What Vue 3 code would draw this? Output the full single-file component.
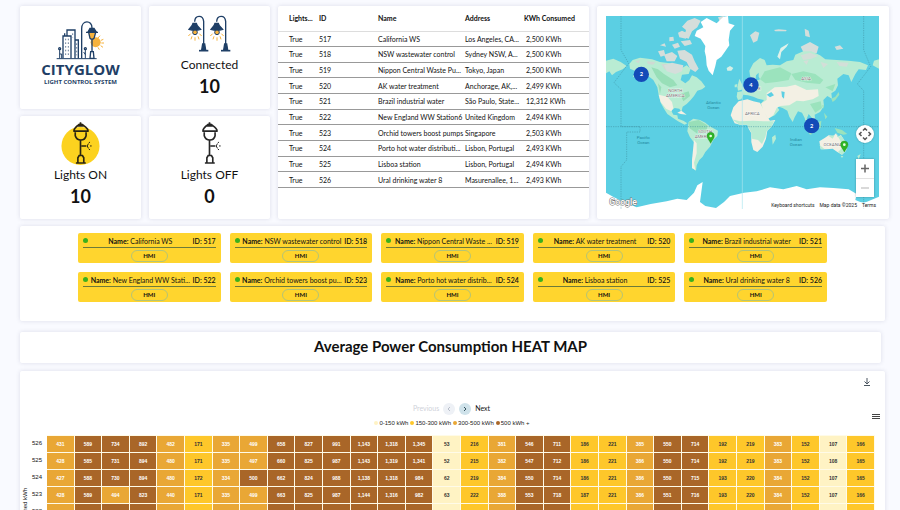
<script setup>
import { ref } from 'vue';

const stations = [
  { id: 517, name: 'California WS', address: 'Los Angeles, CA...', kwh: '2,500' },
  { id: 518, name: 'NSW wastewater control', address: 'Sydney NSW, A...', kwh: '2,500' },
  { id: 519, name: 'Nippon Central Waste Pu...', short: 'Nippon Central Waste ...', address: 'Tokyo, Japan', kwh: '2,500' },
  { id: 520, name: 'AK water treatment', address: 'Anchorage, AK,...', kwh: '2,499' },
  { id: 521, name: 'Brazil industrial water', address: 'São Paulo, State...', kwh: '12,312' },
  { id: 522, name: 'New England WW Station6', short: 'New England WW Stati...', address: 'United Kingdom', kwh: '2,494' },
  { id: 523, name: 'Orchid towers boost pumps', short: 'Orchid towers boost pu...', address: 'Singapore', kwh: '2,503' },
  { id: 524, name: 'Porto hot water distributi...', short: 'Porto hot water distrib...', address: 'Lisbon, Portugal', kwh: '2,493' },
  { id: 525, name: 'Lisboa station', address: 'Lisbon, Portugal', kwh: '2,494' },
  { id: 526, name: 'Ural drinking water 8', address: 'Masurenallee, 1...', kwh: '2,493' },
];

const heatRows = [
  { id: 526, values: [431, 589, 734, 892, 482, 171, 335, 499, 658, 827, 991, 1143, 1318, 1345, 53, 216, 381, 546, 711, 186, 221, 385, 550, 714, 192, 219, 383, 152, 107, 166] },
  { id: 525, values: [428, 585, 731, 894, 480, 171, 335, 497, 660, 825, 987, 1143, 1319, 1341, 52, 215, 382, 547, 712, 186, 221, 386, 550, 714, 192, 219, 383, 152, 108, 165] },
  { id: 524, values: [427, 588, 730, 894, 480, 172, 334, 500, 662, 824, 988, 1138, 1318, 984, 62, 219, 384, 550, 714, 186, 221, 386, 550, 715, 193, 220, 384, 152, 107, 165] },
  { id: 523, values: [428, 589, 494, 823, 440, 171, 335, 499, 663, 825, 987, 1144, 1316, 982, 63, 222, 388, 553, 718, 187, 221, 386, 551, 716, 193, 220, 384, 152, 107, 166] },
  { id: 522, values: [427, 586, 732, 893, 481, 172, 335, 498, 661, 825, 988, 1142, 1317, 983, 62, 220, 385, 551, 715, 187, 221, 386, 551, 715, 193, 220, 384, 152, 107, 166] },
];

const legend = [
  { label: '0-150 kWh', level: 'low' },
  { label: '150-300 kWh', level: 'mid' },
  { label: '300-500 kWh', level: 'high' },
  { label: '500 kWh +', level: 'max' },
];

const level = (v) => {
  if (v < 150) return 'low';
  if (v < 300) return 'mid';
  if (v < 500) return 'high';
  return 'max';
};

const clusters = [
  { x: 154, y: 223, count: 2 },
  { x: 483, y: 255, count: 4 },
  { x: 665, y: 377, count: 2 },
];

const page = ref(0);
</script>

<template>
  <div class="dashboard">
    <div class="top">
      <div class="card brand">
        <svg class="brand-icon" viewBox="162 62 150 120" fill="none" stroke="#1f3f66" stroke-width="4">
          <circle cx="281" cy="129" r="15" fill="#f6b23c" stroke="none" />
          <g stroke="#f6b23c" stroke-width="3">
            <path d="M288 116L294 109M297 123L304 120M298 131H306M296 139L303 144M288 144L292 151" />
          </g>
          <path d="M164 178H284" stroke-width="3" />
          <path d="M183 177V110H195V92H219V122M207 177V110H195M219 122H229V177M219 122V177M188 110V102" />
          <path d="M191 118V170M199 118V170M212 102V114M224 132V168" stroke-width="2" stroke-dasharray="5 6" />
          <path d="M173 177V152M179 177V164H173M250 177V152M245 158L250 166" stroke-width="3" />
          <circle cx="173" cy="148" r="3" /><circle cx="250" cy="148" r="3" />
          <path d="M239 177V88C239 61 270 61 270 86" />
          <path d="M258 98L264 87H276L283 98Z" fill="#1f3f66" />
          <path d="M260 99L264 117Q270 123 276 117L281 99Z" fill="#f6b23c" />
          <path d="M252 99H288M270 122V156M264 177L266 157H274L276 177Z" />
        </svg>
        <div class="brand-name">CITYGLOW</div>
        <div class="brand-sub">LIGHT CONTROL SYSTEM</div>
      </div>

      <div class="card stat">
        <div class="stat-icon">
          <svg class="pair" viewBox="566 45 129 111" fill="none" stroke="#1f3f66" stroke-width="4">
            <g v-for="dx in [0, 66]" :key="dx" :transform="`translate(${dx} 0)`">
              <path d="M613 140V64C611 44 587 44 586 65" />
              <path d="M607 150L610 132H616L619 150Z" fill="#1f3f66" />
              <path d="M599 152H627" stroke-width="5" />
              <path d="M581 70H591L594 77L604 88Q587 94 569 88L578 77Z" fill="#1f3f66" />
              <circle cx="587" cy="97" r="7" fill="#f6b23c" stroke-width="3" />
              <path d="M574 101L567 108M578 109L575 118M587 112V122M596 109L599 118M600 101L607 108" stroke="#f6b23c" stroke-width="3" />
            </g>
          </svg>
        </div>
        <div class="stat-label">Connected</div>
        <div class="stat-value">10</div>
      </div>

      <div class="card stat on">
        <div class="stat-icon">
          <svg class="lamp" viewBox="180 365 118 131" fill="none" stroke="#2a2412" stroke-width="5">
            <circle cx="239" cy="438" r="58" fill="#fcd21f" stroke="none" />
            <path d="M239 366V371M229 377Q239 366 250 377M219 392Q219 386 229 377H250Q262 386 262 392M217 393H264M223 396V407Q227 420 240 420Q253 420 256 407V396" />
            <path d="M239 420V466M242 438H257M231 489V474L235 467H245L249 474V489M225 490H255" />
            <path d="M263 431Q256 438 263 445M264 429L268 426M268 438H273M264 447L268 450" stroke-width="3" />
          </svg>
        </div>
        <div class="stat-label">Lights ON</div>
        <div class="stat-value">10</div>
      </div>

      <div class="card stat off">
        <div class="stat-icon">
          <svg class="lamp" viewBox="180 365 118 131" fill="none" stroke="#262626" stroke-width="5">
            <path d="M239 366V371M229 377Q239 366 250 377M219 392Q219 386 229 377H250Q262 386 262 392M217 393H264M223 396V407Q227 420 240 420Q253 420 256 407V396" />
            <path d="M239 420V466M242 438H257M231 489V474L235 467H245L249 474V489M225 490H255" />
            <path d="M263 431Q256 438 263 445M264 429L268 426M268 438H273M264 447L268 450" stroke-width="3" />
          </svg>
        </div>
        <div class="stat-label">Lights OFF</div>
        <div class="stat-value">0</div>
      </div>

      <div class="card list">
        <table>
          <thead>
            <tr>
              <th class="c-on">Lights...</th>
              <th class="c-id">ID</th>
              <th class="c-name">Name</th>
              <th class="c-addr">Address</th>
              <th class="c-kwh">KWh Consumed</th>
            </tr>
          </thead>
          <tbody>
            <tr v-for="s in stations" :key="s.id">
              <td>True</td>
              <td>{{ s.id }}</td>
              <td>{{ s.name }}</td>
              <td>{{ s.address }}</td>
              <td>{{ s.kwh }} KWh</td>
            </tr>
          </tbody>
        </table>
      </div>

      <div class="card map-card">
        <div class="map">
          <svg class="world" viewBox="48 48 819 579" preserveAspectRatio="xMidYMid slice">
            <rect x="48" y="48" width="819" height="579" fill="#5bcfe3" />
            <!-- americas -->
            <g fill="#b9ecd3">
              <path d="M118 192L128 180 150 173 186 178 210 186 240 190 262 196 276 204 290 196 302 206 296 222 276 224 272 240 286 250 298 240 306 226 320 232 334 244 346 260 336 268 322 272 312 288 302 300 290 312 278 320 274 336 268 326 254 324 244 332 250 344 262 346 264 356 280 362 292 370 284 374 264 364 246 352 232 342 222 326 212 308 206 284 202 262 190 240 172 226 150 222 128 232 138 214 120 206Z" />
              <path d="M296 366L310 356 330 360 346 368 358 378 384 392 382 408 370 420 360 440 346 456 338 470 328 480 320 496 318 512 306 504 306 484 312 456 314 430 300 412 292 394Z" />
            </g>
            <path d="M206 284L232 290 246 306 250 324 244 334 228 326 212 306ZM312 420L320 430 320 460 312 488 316 510 306 504 306 480ZM262 338L274 332 290 344 272 342Z" fill="#f3f0e4" />
            <path d="M184 202L204 208 222 222 250 240 262 256 240 262 216 250 200 232ZM296 366L326 360 352 376 350 396 320 400 298 384ZM270 282L296 274 300 288 280 304ZM204 250L214 262 210 282Z" fill="#98dfb8" />
            <path d="M170 184L196 186 190 194 174 192ZM214 192L240 192 258 200 270 206 262 218 240 214 222 206ZM136 184L150 180 146 190Z" fill="#cfd9d3" />
            <!-- arctic islands -->
            <g fill="#d5dedb">
              <path d="M204 154L222 150 226 166 212 170ZM222 164L246 156 262 168 254 184 230 184ZM246 134L264 128 270 140 254 146ZM264 98L276 92 292 100 288 116 268 112ZM292 62L314 54 332 62 322 82 306 94 296 116 282 112 288 90 276 80ZM262 152L284 150 306 164 314 184 326 206 316 216 300 206 290 186 270 176ZM210 136L224 130 228 140ZM238 112L250 110 252 122 238 124ZM272 124L300 120 306 132 284 138ZM222 196L246 188 280 196 276 214 256 222 230 214ZM384 52L400 48 408 60 392 70Z" />
              <path d="M480 106L496 94 508 98 502 122 490 128ZM644 86L656 92 660 112 646 108ZM632 140L660 126 686 140 680 160 640 156ZM552 90L566 88 590 90 588 94H556ZM734 140L750 136 760 146 740 150Z" />
            </g>
            <path d="M562 170L572 144 596 130 590 140 574 156 570 178Z" fill="#dff2ea" />
            <path d="M320 92L340 82 332 66 350 54 380 70 400 50 414 48 416 70 434 76 420 92 416 120 418 136 404 156 394 170 380 180 376 198 368 226 356 212 350 196 348 170 344 154 346 138 332 116 314 108Z" fill="#fff" />
            <path d="M410 204L420 198 430 204 424 212H412Z" fill="#d5efe6" />
            <!-- europe and asia -->
            <path d="M440 290L442 276 456 274 458 262 474 252 484 240 480 226 478 212 490 190 510 174 524 180 530 196 548 194 570 196 590 184 610 180 616 164 640 154 664 154 690 166 706 178 740 180 776 182 810 186 834 196 828 210 806 208 796 222 784 246 776 226 760 222 742 236 744 256 736 272 724 280 726 296 712 288 700 300 702 318 690 336 674 344 676 362 664 352 656 342 650 356 664 392 650 380 644 354 636 338 624 334 614 352 608 366 598 350 592 332 578 324 560 318 568 330 554 346 534 356 520 334 512 312 522 300 504 296 490 290 474 286 460 284 454 298 444 300Z" fill="#b9ecd3" />
            <path d="M530 280L554 262 590 260 616 254 650 270 684 268 686 288 668 298 640 304 620 302 598 316 570 318 560 324 550 346 534 356 520 334 514 310 530 300Z" fill="#f3f0e4" />
            <path d="M524 214L570 202 604 220 596 240 560 246 526 250 510 238ZM604 222L640 214 676 222 700 240 690 252 650 248 616 240ZM660 312L692 304 696 324 676 338ZM706 262L736 252 728 274Z" fill="#9be3bd" />
            <path d="M632 166L660 158 684 168 664 176 640 180ZM640 184L656 180 650 194ZM740 186L776 188 770 200 748 198ZM692 186L714 192 700 204Z" fill="#d3dfd8" />
            <path d="M48 182L70 176 92 186 110 198 98 208 78 216 66 226 58 214 48 220ZM867 178L852 182 848 196 867 206ZM442 260L448 236 456 252 460 268 444 272ZM434 254L442 252 440 262H434Z" fill="#b9ecd3" />
            <path d="M506 218L498 226 496 244 510 238 506 230ZM530 284L544 276 552 286 540 292Z M574 274L584 276 582 296 576 290Z" fill="#5bcfe3" />
            <path d="M724 296L736 290 746 276 748 284 736 300 728 306ZM644 382L660 392 668 402 660 404ZM672 372L694 362 692 384 676 388ZM734 384L756 390 772 402 760 404 742 398ZM696 316L702 316 700 326ZM702 338L712 350 706 358Z" fill="#9be3bd" />
            <!-- africa -->
            <path d="M422 346L430 322 446 304 472 298 490 304 510 308 520 328 530 348 540 362 556 360 546 378 532 392 528 416 518 440 502 456 490 450 484 426 484 400 476 386 472 374 450 374 434 370Z" fill="#f3f0e4" />
            <path d="M426 358L450 364 490 362 520 364 552 364 544 380 530 394 526 412 516 432 504 420 486 416 484 398 472 374 448 374ZM546 412L556 404 558 416 548 434Z" fill="#b9ecd3" />
            <!-- oceania -->
            <path d="M688 424L704 414 716 406 730 408 738 400 744 412 752 404 760 416 772 434 768 452 756 464 742 456 728 446 708 448 692 448Z" fill="#f3f0e4" />
            <path d="M738 400L748 410 752 404 760 416 774 436 768 452 756 464 744 456 760 440 750 420ZM716 408L734 406 728 416ZM688 434L694 448 704 448ZM752 468H760L756 474ZM802 468L812 462 806 478Z" fill="#b9ecd3" />
            <path d="M48 578L72 592 96 604 140 622 182 612 230 604 262 596 290 600 312 578 322 556 338 546 334 576 330 606 346 618 378 624 402 606 420 588 462 578 500 574 540 562 580 568 620 558 650 568 690 562 730 564 776 568 800 582 796 600 820 610 867 590V627H48Z" fill="#fff" />
            <!-- meridian, equator and date line -->
            <path d="M457 48V627" stroke="#a9e6ee" stroke-width="2" />
            <g fill="none" stroke="#3f8f9f" stroke-width="1.5" stroke-dasharray="4 3">
              <path d="M48 380H867" />
              <path d="M93 48V150L116 190 72 248 93 268V380H150V396H110V480L93 500V627M821 48V150L842 200 802 252 821 272V627" />
            </g>
            <g class="label land">
              <text x="256" y="275">NORTH</text><text x="256" y="290">AMERICA</text>
              <text x="345" y="400">SOUTH</text><text x="342" y="414">AMERICA</text>
              <text x="487" y="345">AFRICA</text><text x="648" y="240">ASIA</text>
              <text x="488" y="270">EUROPE</text><text x="728" y="438">OCEANIA</text>
            </g>
            <g class="label sea">
              <text x="370" y="313">Atlantic</text><text x="370" y="326">Ocean</text>
              <text x="160" y="418">Pacific</text><text x="160" y="431">Ocean</text>
              <text x="618" y="424">Indian</text><text x="618" y="437">Ocean</text>
            </g>
            <g v-for="p in [[362, 410], [763, 436]]" :key="p[0]" :transform="`translate(${p[0]} ${p[1]})`">
              <path d="M0 20C-4 10 -11 6 -11 -2A11 11 0 0 1 11 -2C11 6 4 10 0 20Z" fill="#2fb527" stroke="#17851a" />
              <circle cy="-2" r="4" fill="#e9ffe5" />
            </g>
            <g v-for="c in clusters" :key="c.x" class="cluster">
              <circle :cx="c.x" :cy="c.y" r="23" fill="#134bb8" />
              <text :x="c.x" :y="c.y + 6">{{ c.count }}</text>
            </g>
            <text class="google" x="58" y="616">Google</text>
          </svg>
          <button class="pan" aria-label="Map camera controls">
            <svg viewBox="0 0 18 18" fill="none" stroke="#555" stroke-width="1.5">
              <path d="M7 5.5L9 3.5L11 5.5M7 12.5L9 14.5L11 12.5M5.5 7L3.5 9L5.5 11M12.5 7L14.5 9L12.5 11" />
            </svg>
          </button>
          <div class="zoom">
            <button aria-label="Zoom in">
              <svg viewBox="0 0 18 18" stroke="#666" stroke-width="1.5"><path d="M5 9H13M9 5V13" /></svg>
            </button>
            <button aria-label="Zoom out" disabled>
              <svg viewBox="0 0 18 18" stroke="#ccc" stroke-width="1.5"><path d="M5 9H13" /></svg>
            </button>
          </div>
          <div class="attribution">
            <button>Keyboard shortcuts</button>
            <span>Map data ©2025</span>
            <a href="#">Terms</a>
          </div>
        </div>
      </div>
    </div>

    <div class="card devices">
      <div v-for="s in stations" :key="s.id" class="device">
        <div class="device-head">
          <i class="dot"></i>
          <div class="device-name"><b>Name:</b> {{ s.short || s.name }}</div>
          <div class="device-id">ID: {{ s.id }}</div>
        </div>
        <button class="hmi">HMI</button>
      </div>
    </div>

    <h1 class="card title">Average Power Consumption HEAT MAP</h1>

    <div class="card chart">
      <button class="download" aria-label="Download">
        <svg viewBox="0 0 8 10" fill="none" stroke="#4a5560"><path d="M4 1V7M1.5 4.5L4 7L6.5 4.5M1 8.5H7" /></svg>
      </button>
      <div class="pager">
        <span class="muted">Previous</span>
        <button :disabled="page === 0" aria-label="Previous" @click="page--">
          <svg viewBox="0 0 12 12" fill="none" stroke="currentColor"><path d="M7 4L5 6L7 8" /></svg>
        </button>
        <button aria-label="Next" @click="page++">
          <svg viewBox="0 0 12 12" fill="none" stroke="currentColor"><path d="M5 4L7 6L5 8" /></svg>
        </button>
        <span>Next</span>
      </div>
      <button class="menu" aria-label="Chart menu"><i></i><i></i><i></i></button>
      <div class="legend">
        <span v-for="l in legend" :key="l.level"><i :class="l.level"></i>{{ l.label }}</span>
      </div>
      <div class="heat">
        <div class="axis-title">Average consumed kWh</div>
        <div class="rows">
          <div v-for="row in heatRows" :key="row.id" class="row">
            <div class="row-id">{{ row.id }}</div>
            <div v-for="(v, i) in row.values" :key="i" class="cell" :class="level(v)">{{ v.toLocaleString('en-US') }}</div>
          </div>
        </div>
      </div>
    </div>
  </div>
</template>

<style>
body { background: #f9faff; }
</style>

<style scoped>
* { box-sizing: border-box; }
.dashboard { height: 100vh; overflow-y: auto; scrollbar-width: none; padding: 6px 11px 0 20px; font-family: Lato, "Liberation Sans", sans-serif; color: #111; background: #f9faff; }
button { border: 0; padding: 0; margin: 0; background: none; font: inherit; color: inherit; cursor: pointer; }
button svg { display: block; width: 100%; height: 100%; }
.card { background: #fff; border-radius: 2px; box-shadow: 0 0 4px rgba(60, 65, 110, 0.16); }

.top { display: grid; grid-template-columns: 121fr 121fr 311fr 292fr; grid-template-rows: 103px 103px; gap: 7px 8px; }
.list { grid-column: 3; grid-row: 1 / 3; }
.map-card { grid-column: 4; grid-row: 1 / 3; padding: 10px 10px 10px 9px; }
.on { grid-column: 1; grid-row: 2; }
.off { grid-column: 2; grid-row: 2; }

.brand { display: flex; flex-direction: column; align-items: center; padding-top: 14px; color: #1f3f66; }
.brand-icon { width: 50px; height: 40px; }
.brand-name { font: 700 15px/18px "Open Sans", sans-serif; }
.brand-sub { font: 700 6px/8px "Open Sans", sans-serif; }

.stat { text-align: center; }
.stat-icon { height: 50px; display: flex; justify-content: center; align-items: flex-end; padding-bottom: 1px; }
.pair { width: 43px; height: 37px; margin-bottom: 3px; }
.lamp { width: 39px; height: 43px; }
.stat-label { font-size: 12px; line-height: 18px; }
.stat-value { font-size: 18px; line-height: 24px; font-weight: 700; }

table { width: 100%; height: 182px; border-collapse: collapse; table-layout: fixed; font-size: 7px; line-height: 10px; }
th, td { text-align: left; padding: 0; white-space: nowrap; }
th { height: 25px; font-weight: 700; border-bottom: 1px solid #ddd; }
td { border-bottom: 1px solid #999; }
th:first-child, td:first-child { padding-left: 11px; }
td:last-child { padding-left: 2px; }
.c-on { width: 41px; }
.c-id { width: 59px; }
.c-name { width: 87px; }
.c-addr { width: 59px; }

.map { position: relative; height: 100%; overflow: hidden; }
.world { display: block; width: 100%; height: 100%; }
.label text { text-anchor: middle; font-family: Roboto, sans-serif; font-size: 13px; }
.land text { fill: #6d6a6c; stroke: #fff; stroke-width: 2px; paint-order: stroke; }
.sea text { fill: #2389a0; }
.cluster text { text-anchor: middle; fill: #fff; font: 700 17px Lato, sans-serif; }
.google { font: 500 26px Roboto, sans-serif; fill: #fff; stroke: #777; stroke-width: 3px; paint-order: stroke; }
.pan { position: absolute; right: 5px; bottom: 66px; width: 18px; height: 18px; border-radius: 50%; background: #fff; box-shadow: 0 0 2px rgba(0, 0, 0, 0.3); }
.zoom { position: absolute; right: 5px; bottom: 12px; width: 18px; background: #fff; box-shadow: 0 0 2px rgba(0, 0, 0, 0.3); }
.zoom button { display: block; width: 18px; height: 19px; }
.zoom button + button { border-top: 1px solid #e3e3e3; }
.attribution { position: absolute; right: 0; bottom: 0; display: flex; gap: 5px; padding: 0 3px; font: 5px/7px Roboto, sans-serif; color: #222; background: rgba(255, 255, 255, 0.6); }
.attribution a { color: inherit; text-decoration: none; }

.devices { display: grid; grid-template-columns: repeat(5, minmax(0, 1fr)); gap: 9px; margin: 7px 4px 0 0; padding: 7px 58px 19px; }
.device { height: 30px; padding: 1px 5px; border-radius: 2px; background: #ffd52e; text-align: center; }
.device-head { display: flex; align-items: center; height: 14px; border-bottom: 1px solid #6d7a3a; font-size: 7px; line-height: 10px; }
.dot { flex: none; width: 5px; height: 5px; border-radius: 50%; background: #3bb01c; }
.device-name { flex: 1; min-width: 0; margin: 0 2px; white-space: nowrap; }
.device-id { flex: none; font-weight: 600; }
.hmi { display: block; width: 37px; height: 12px; margin: 2px auto 0; border: 1px solid #b5c476; border-radius: 6px; font-size: 6px; line-height: 10px; font-weight: 700; }

.title { margin: 11px 8px 0 0; padding-bottom: 3px; font-size: 15px; line-height: 28px; font-weight: 700; text-align: center; }

.chart { position: relative; margin: 8px 4px 0 0; padding: 31px 10px 20px 0; }
.download { position: absolute; top: 6px; right: 14px; width: 8px; height: 10px; }
.pager { display: flex; align-items: center; justify-content: center; gap: 4px; height: 13px; padding-left: 8px; font-size: 7px; line-height: 13px; }
.pager button { width: 12px; height: 12px; border-radius: 50%; background: #cfe2ea; color: #33505c; }
.pager button:disabled { background: #eef1f6; color: #b7bdc8; }
.muted { color: #cfd2da; }
.menu { position: absolute; top: 43px; right: 5px; width: 8px; }
.menu i { display: block; height: 1px; margin-bottom: 1px; background: #444; }
.legend { display: flex; justify-content: center; gap: 2px; margin-top: 4px; padding-left: 9px; font: 6px/8px "Liberation Sans", sans-serif; color: #222; }
.legend span { display: flex; align-items: center; gap: 1px; }
.legend i { width: 4px; height: 4px; border-radius: 50%; }

.heat { display: flex; align-items: center; margin-top: 8px; min-height: 172px; }
.axis-title { flex: none; width: 10px; line-height: 10px; writing-mode: vertical-rl; transform: rotate(180deg); font-family: "Liberation Sans", sans-serif; font-size: 6px; white-space: nowrap; }
.rows { flex: 1; min-width: 0; align-self: stretch; }
.row { display: grid; grid-template-columns: 17px repeat(30, minmax(0, 1fr)); height: 17px; font: 5px/16px "Liberation Sans", sans-serif; text-align: center; }
.row-id { padding-right: 5px; font-size: 6px; text-align: right; }
.cell { border: solid #fffbe8; border-width: 1px 1px 1px 0; font-weight: 700; }
.low { background: #fff3c4; color: #333; }
.mid { background: #fec72a; color: #333; }
.high { background: #e9a735; color: #fff; }
.max { background: #a96628; color: #fff; }
</style>
